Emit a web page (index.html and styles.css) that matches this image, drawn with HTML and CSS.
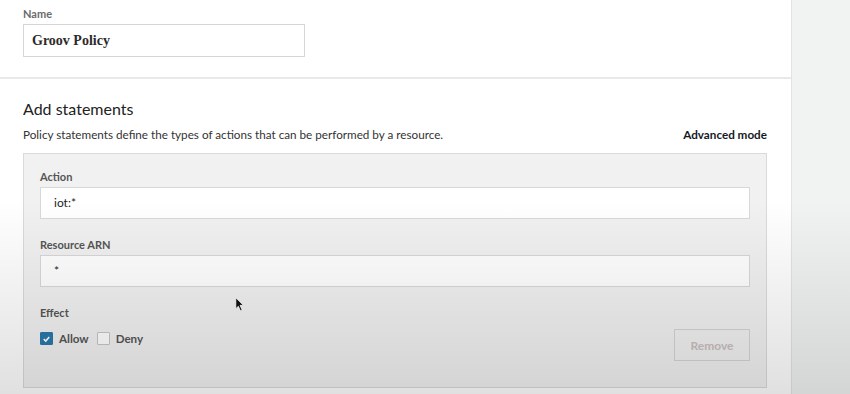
FILE: index.html
```html
<!DOCTYPE html>
<html lang="en">
<head>
    <meta charset="UTF-8">
    <title>Create a policy</title>
    <link rel="stylesheet" href="styles.css">
</head>
<body>
    <div class="page">
        <div class="main">
            <div class="name-section">
                <label class="field-label">Name</label>
                <div class="name-input">Groov Policy</div>
            </div>

            <div class="statements">
                <h2>Add statements</h2>
                <div class="statements-head">
                    <p>Policy statements define the types of actions that can be performed by a resource.</p>
                    <a class="advanced">Advanced mode</a>
                </div>

                <div class="statement">
                    <label class="field-label">Action</label>
                    <div class="text-input">iot:*</div>

                    <label class="field-label">Resource ARN</label>
                    <div class="text-input">*</div>

                    <label class="field-label">Effect</label>
                    <div class="effect-row">
                        <div class="checks">
                            <span class="checkbox checked">
                                <svg viewBox="0 0 12 12" width="12" height="12"><path d="M3 6.2 L5.2 8.2 L9 3.8" fill="none" stroke="#fff" stroke-width="1.8"/></svg>
                            </span>
                            <span class="check-text">Allow</span>
                            <span class="checkbox"></span>
                            <span class="check-text">Deny</span>
                        </div>
                        <button class="remove-button">Remove</button>
                    </div>
                </div>
            </div>
        </div>
        <div class="side"></div>
    </div>

    <!-- video dimming + pointer from the recording -->
    <div class="shade"></div>
    <svg class="cursor" viewBox="0 0 12 18" width="10" height="15">
        <path d="M1 1 L1 14 L4 11 L6.5 16.5 L8.5 15.5 L6 10 L10 10 Z" fill="#111" stroke="#fff" stroke-width="0.8"/>
    </svg>
</body>
</html>
```

FILE: styles.css
```css
body {
    margin: 0;
    font-family: 'Lato', sans-serif;
    color: #222;
    background-color: #f1f2f2;
}

.page {
    display: flex;
    height: 394px;
    overflow: hidden;
}

.main {
    width: 791px;
    background-color: #fff;
    border-right: 1px solid #e3e3e3;
}

.side {
    flex-grow: 1;
    background-color: #f1f2f2;
}

.field-label {
    display: block;
    font-size: 11px;
    font-weight: bold;
    color: #6b6b6b;
    margin-bottom: 4px;
}

/* Name */
.name-section {
    padding: 7px 23px 20px;
    border-bottom: 2px solid #e9e9e9;
}

.name-input {
    width: 264px;
    height: 31px;
    line-height: 31px;
    padding: 0 8px;
    border: 1px solid #d5d5d5;
    font-family: 'Liberation Serif', serif;
    font-weight: bold;
    font-size: 14px;
    color: #2b2b2b;
}

/* Statements */
.statements {
    padding: 20px 24px 0 23px;
}

.statements h2 {
    margin: 0;
    font-size: 16px;
    font-weight: normal;
    color: #222;
}

.statements-head {
    display: flex;
    justify-content: space-between;
    align-items: center;
    margin-top: 9px;
}

.statements-head p {
    margin: 0;
    font-size: 11.7px;
    color: #333;
}

.advanced {
    font-size: 11.7px;
    font-weight: bold;
    color: #16191f;
}

.statement {
    margin-top: 12px;
    height: 201px;
    padding: 16px 16px 16px;
    background-color: #f1f1f1;
    border: 1px solid #dadada;
}

.statement .field-label {
    color: #555;
}

.text-input {
    height: 30px;
    line-height: 30px;
    padding: 0 13px;
    margin-bottom: 19px;
    background-color: #fff;
    border: 1px solid #d8d8d8;
    font-size: 12px;
    color: #222;
}

.effect-row {
    display: flex;
    justify-content: space-between;
    align-items: flex-start;
}

.checks {
    display: flex;
    align-items: center;
    gap: 6px;
    padding-top: 9px;
}

.checkbox {
    display: flex;
    align-items: center;
    justify-content: center;
    width: 11px;
    height: 11px;
    border: 1px solid #c6c6c6;
    background-color: #fff;
    border-radius: 1px;
}

.checkbox.checked {
    background-color: #2a78ab;
    border-color: #2a78ab;
}

.check-text {
    font-size: 11.6px;
    font-weight: bold;
    color: #555;
    margin-right: 2px;
}

.remove-button {
    width: 76px;
    height: 32px;
    margin-top: 6px;
    background-color: transparent;
    border: 1px solid #d4d4d4;
    font-family: 'Lato', sans-serif;
    font-weight: bold;
    font-size: 12px;
    color: #c9bfbf;
}

/* overlays */
.shade {
    position: absolute;
    left: 0;
    top: 0;
    width: 850px;
    height: 394px;
    pointer-events: none;
    background: linear-gradient(to bottom, rgba(0, 0, 0, 0) 0, rgba(0, 0, 0, 0) 200px, rgba(0, 0, 0, 0.12) 394px);
}

.cursor {
    position: absolute;
    left: 235px;
    top: 297px;
}
```
